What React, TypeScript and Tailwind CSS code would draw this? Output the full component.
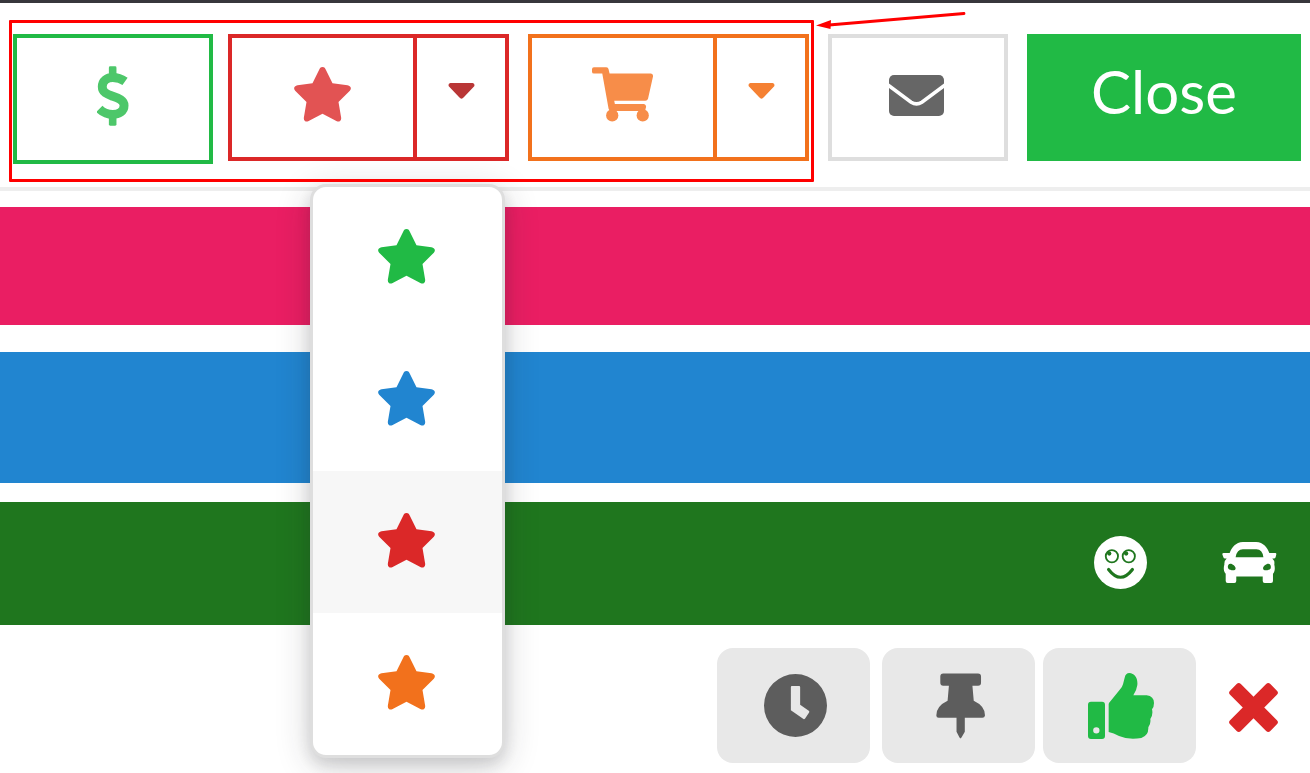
import type { ReactNode } from "react";

type IconProps = { className?: string };

function StarIcon({ className = "" }: IconProps) {
  return (
    <svg viewBox="0 0 170 165" className={`h-[55px] w-[57px] ${className}`} fill="currentColor" aria-hidden="true">
      <path d="M85 0C91 0 93 4 95 8L115 49L160 55C170 57 173 65 167 71L133 105L141 152C142 161 135 166 128 163L85 140L42 163C35 166 28 161 29 152L37 105L3 71C-3 65 0 57 10 55L55 49L75 8C77 4 79 0 85 0Z" />
    </svg>
  );
}

function DollarIcon({ className = "" }: IconProps) {
  return (
    <svg viewBox="0 0 97 180" className={`h-[60px] w-8 ${className}`} aria-hidden="true">
      <g opacity="0.8">
        <rect x="36" y="0" width="23" height="40" rx="4" fill="currentColor" />
        <rect x="36" y="140" width="23" height="40" rx="4" fill="currentColor" />
        <path
          d="M85 46Q68 34 48 34C30 34 16 44 16 62C16 80 32 85 48 91C66 97 82 103 82 119C82 137 66 146 48 146Q24 146 7 129"
          fill="none"
          stroke="currentColor"
          strokeWidth="27"
        />
      </g>
    </svg>
  );
}

function CartIcon({ className = "" }: IconProps) {
  return (
    <svg viewBox="0 0 184 164" className={`h-[55px] w-[61px] ${className}`} fill="currentColor" aria-hidden="true">
      <path d="M6 0H43Q49 0 50 6L53 19H177Q185 20 184 28L169 95Q167 101 161 101H67L69 111H157Q164 113 163 120L160 132H54L50 125L31 19H6Q0 19 0 13V6Q0 0 6 0Z" />
      <circle cx="61" cy="145" r="18.5" />
      <circle cx="153" cy="145" r="18.5" />
    </svg>
  );
}

function CaretIcon({ className = "" }: IconProps) {
  return (
    <svg viewBox="0 0 80 49" className={`h-4 w-[27px] ${className}`} fill="currentColor" aria-hidden="true">
      <path d="M6 0H74Q82 2 79 10L47 44Q40 52 33 44L1 10Q-2 2 6 0Z" />
    </svg>
  );
}

function EnvelopeIcon({ className = "" }: IconProps) {
  return (
    <svg viewBox="0 0 164 122" className={`h-[41px] w-[55px] ${className}`} aria-hidden="true">
      <rect width="164" height="122" rx="15" fill="currentColor" />
      <path d="M-4 29L66 81Q82 91 98 81L168 29" fill="none" stroke="#fff" strokeWidth="10.5" />
    </svg>
  );
}

function SmileIcon({ className = "" }: IconProps) {
  return (
    <svg viewBox="0 0 160 160" className={`h-[53px] w-[53px] ${className}`} aria-hidden="true">
      <circle cx="80" cy="80" r="80" fill="#fff" />
      <g fill="none" stroke="currentColor" strokeWidth="5.500">
        <circle cx="54" cy="61" r="18.5" />
        <circle cx="105" cy="61" r="18.5" />
      </g>
      <circle cx="46" cy="53" r="6.5" fill="currentColor" />
      <circle cx="97" cy="53" r="6.5" fill="currentColor" />
      <path d="M44 101Q80 148 116 101" fill="none" stroke="currentColor" strokeWidth="9.500" strokeLinecap="round" />
    </svg>
  );
}

function CarIcon({ className = "" }: IconProps) {
  return (
    <svg viewBox="0 0 164 124" className={`h-[41px] w-[55px] ${className}`} fill="currentColor" aria-hidden="true">
      <path
        fillRule="evenodd"
        d="M22 33C28 18 40 0 62 0H102C124 0 136 18 142 33H160Q164 33 163 38L161 46Q160 50 155 50H151Q159 57 157 68Q160 80 157 89Q155 94 153 96V118Q153 124 147 124H128Q122 124 122 118V104H42V118Q42 124 36 124H16Q10 124 10 118V96Q6 92 5 87Q3 78 6 68Q5 57 13 50H8Q4 50 3 46L0 38Q-1 33 4 33ZM40 46H124Q121 22 103 22H62Q44 22 40 46ZM24 66C14 66 14 84 24 84C31 87 40 86 40 80C40 74 31 66 24 66ZM139 66C149 66 149 84 140 84C133 87 123 86 123 80C123 74 132 66 139 66Z"
      />
    </svg>
  );
}

function ClockIcon({ className = "" }: IconProps) {
  return (
    <svg viewBox="0 0 190 190" className={`h-[63px] w-[63px] ${className}`} fill="currentColor" aria-hidden="true">
      <path
        fillRule="evenodd"
        d="M95 0A95 95 0 1 1 95 190A95 95 0 1 1 95 0ZM84 36Q81 36 81 39V109L119 136Q122 137 124 134L136 116Q138 113 135 111L109 93V39Q109 36 106 36Z"
      />
    </svg>
  );
}

function PinIcon({ className = "" }: IconProps) {
  return (
    <svg viewBox="0 0 148 197" className={`h-[66px] w-[49px] ${className}`} fill="currentColor" aria-hidden="true">
      <path d="M22 0H127Q136 0 136 9V28Q136 37 127 37H110L114 83Q148 99 148 127Q147 134 140 134H87V176L77 194Q74 199 71 194L62 176V134H8Q1 134 1 127Q1 99 35 83L39 37H22Q13 37 13 28V9Q13 0 22 0Z" />
    </svg>
  );
}

function ThumbIcon({ className = "" }: IconProps) {
  return (
    <svg viewBox="0 0 198 198" className={`h-[66px] w-[66px] ${className}`} fill="currentColor" aria-hidden="true">
      <path
        fillRule="evenodd"
        d="M9 86H42Q51 86 51 95V189Q51 198 42 198H9Q0 198 0 189V95Q0 86 9 86ZM25 162.500A9.500 9.500 0 1 0 25 181.500A9.500 9.500 0 1 0 25 162.500Z"
      />
      <path d="M62 94Q62 89 66 86L94 52Q103 43 105 34L110 14Q113 0 124 0C140 2 150 14 148 36Q146 52 136 67H176Q198 70 198 90Q198 102 192 109Q196 125 187 138Q189 153 181 163Q182 188 160 195Q120 201 93 189Q77 180 62 177Z" />
    </svg>
  );
}

function CrossIcon({ className = "" }: IconProps) {
  return (
    <svg viewBox="0 0 148 148" className={`h-[49px] w-[49px] ${className}`} fill="currentColor" aria-hidden="true">
      <rect x="-12" y="51" width="172" height="46" rx="9" transform="rotate(45 74 74)" />
      <rect x="-12" y="51" width="172" height="46" rx="9" transform="rotate(-45 74 74)" />
    </svg>
  );
}

function SplitButton({
  label,
  frame,
  divider,
  icon,
  caret,
  children,
}: {
  label: string;
  frame: string;
  divider: string;
  icon: ReactNode;
  caret: ReactNode;
  children?: ReactNode;
}) {
  return (
    <div className={`relative flex h-[127px] w-[281px] border-4 ${frame}`}>
      <button type="button" aria-label={label} className="flex flex-1 items-center justify-center pb-1.5">
        {icon}
      </button>
      <button
        type="button"
        aria-label={`${label} options`}
        className={`flex w-[92px] items-center justify-center border-l-4 pb-3.5 ${divider}`}
      >
        {caret}
      </button>
      {children}
    </div>
  );
}

const starOptions = [
  { name: "Green", color: "text-[#21ba45]", row: "" },
  { name: "Blue", color: "text-[#2185d0]", row: "" },
  { name: "Red", color: "text-[#db2828]", row: "bg-[#f7f7f7]" },
  { name: "Orange", color: "text-[#f2711c]", row: "" },
];

function StarMenu() {
  return (
    <div className="absolute top-[146px] right-0 z-10 w-[195px] overflow-hidden rounded-2xl border-[3px] border-[#dedede] bg-white shadow-[0_7px_14px_rgba(34,36,38,0.12),0_7px_35px_rgba(34,36,38,0.2)]">
      {starOptions.map((o) => (
        <button
          key={o.name}
          type="button"
          aria-label={`${o.name} star`}
          className={`flex h-[142px] w-full items-center justify-center pr-0.5 pb-1 ${o.row}`}
        >
          <StarIcon className={o.color} />
        </button>
      ))}
    </div>
  );
}

function Callout() {
  return (
    <>
      <div className="pointer-events-none absolute inset-0 z-20 rounded-[1px] border-[3px] border-[#ff0000]" />
      <svg
        viewBox="0 0 152 24"
        className="pointer-events-none absolute -top-3 left-full z-20 h-6 w-[152px]"
        aria-hidden="true"
      >
        <path d="M150 5.500L15 17" stroke="#f00" strokeWidth="2.800" strokeLinecap="round" />
        <path d="M2 17.500L17 12L16.500 21Z" fill="#f00" />
      </svg>
    </>
  );
}

export default function App() {
  return (
    <div className="min-h-screen overflow-hidden bg-white font-['Lato',sans-serif]">
      <header className="flex items-start border-t-[3px] border-b-4 border-t-[#38373c] border-b-[#eeeeee] pt-[17px] pr-[9px] pb-[5px] pl-[9px]">
        <div className="relative flex shrink-0 items-start pt-3.5 pr-[5px] pb-[18px] pl-1">
          <button
            type="button"
            aria-label="Payment"
            className="mr-[15px] flex h-[130px] w-[200px] items-center justify-center border-4 border-[#21ba45] pb-1.5 text-[#21ba45]"
          >
            <DollarIcon />
          </button>
          <div className="flex gap-[19px]">
            <SplitButton
              label="Star"
              frame="border-[#db2828]"
              divider="border-[#db2828]"
              icon={<StarIcon className="text-[#e25353]" />}
              caret={<CaretIcon className="text-[#b93636]" />}
            >
              <StarMenu />
            </SplitButton>
            <SplitButton
              label="Cart"
              frame="border-[#f2711c]"
              divider="border-[#f2711c]"
              icon={<CartIcon className="text-[#f78d49]" />}
              caret={<CaretIcon className="text-[#f58133]" />}
            />
          </div>
          <Callout />
        </div>
        <div className="flex flex-1 gap-[19px] pt-3.5 pl-3.5">
          <button
            type="button"
            aria-label="Message"
            className="flex h-[127px] w-[180px] items-center justify-center border-4 border-[#dedede] pr-1 pb-1 text-[#666666]"
          >
            <EnvelopeIcon />
          </button>
          <button type="button" className="h-[127px] flex-1 bg-[#21ba45] pb-3.5 text-[60px] leading-none text-white">
            Close
          </button>
        </div>
      </header>

      <main>
        <div className="mt-4 h-[118px] bg-[#ea1e63]" />
        <div className="mt-[27px] h-[131px] bg-[#2185d0]" />
        <div className="mt-[19px] flex h-[123px] items-center justify-end gap-[75px] bg-[#1f761e] pr-[33px] pb-0.5">
          <SmileIcon className="text-[#1f761e]" />
          <CarIcon className="text-white" />
        </div>
        <div className="mt-[23px] flex items-center justify-end pr-8">
          <button
            type="button"
            aria-label="Schedule"
            className="mr-3 flex h-[115px] w-[153px] items-center justify-center rounded-2xl bg-[#e8e8e8] pl-1 text-[#5d5d5d]"
          >
            <ClockIcon />
          </button>
          <button
            type="button"
            aria-label="Pin"
            className="mr-2 flex h-[115px] w-[153px] items-center justify-center rounded-2xl bg-[#e8e8e8] pl-1 text-[#5d5d5d]"
          >
            <PinIcon />
          </button>
          <button
            type="button"
            aria-label="Approve"
            className="flex h-[115px] w-[153px] items-center justify-center rounded-2xl bg-[#e8e8e8] pl-0.5 text-[#21ba45]"
          >
            <ThumbIcon />
          </button>
          <button type="button" aria-label="Remove" className="pt-1 pl-[33px] text-[#db2828]">
            <CrossIcon />
          </button>
        </div>
      </main>
    </div>
  );
}
